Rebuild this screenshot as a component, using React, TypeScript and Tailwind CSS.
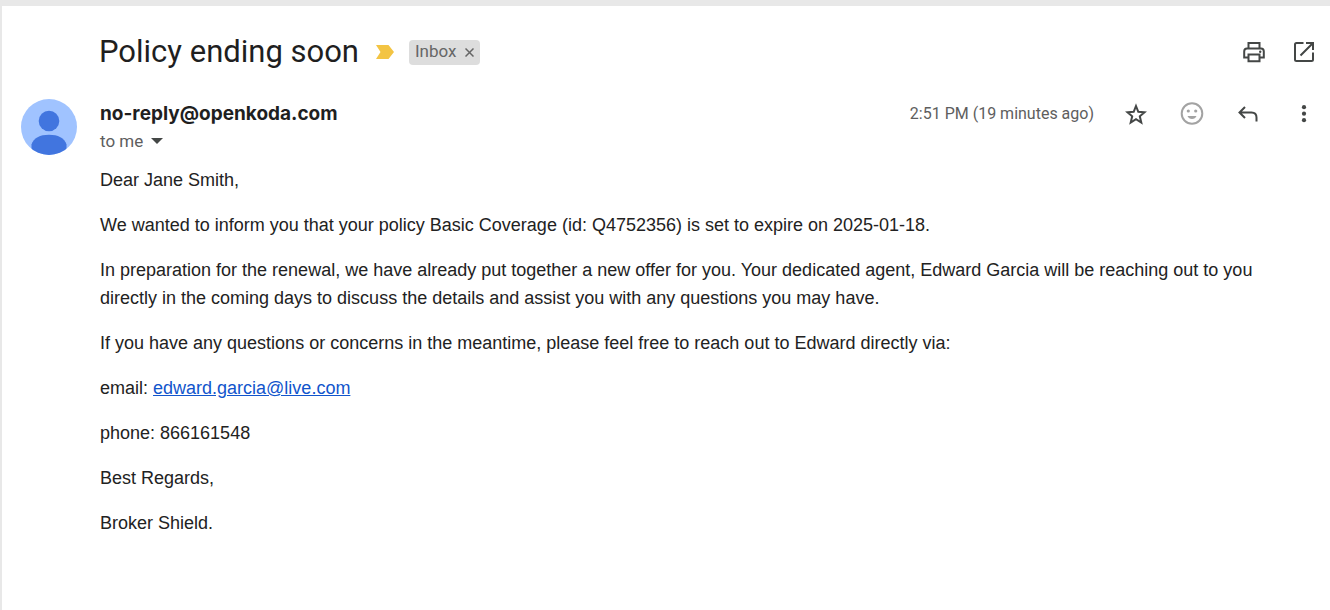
import type { ReactNode } from "react";

const paragraphs = [
  "Dear Jane Smith,",
  "We wanted to inform you that your policy Basic Coverage (id: Q4752356) is set to expire on 2025-01-18.",
  "In preparation for the renewal, we have already put together a new offer for you. Your dedicated agent, Edward Garcia will be reaching out to you directly in the coming days to discuss the details and assist you with any questions you may have.",
  "If you have any questions or concerns in the meantime, please feel free to reach out to Edward directly via:",
];

function IconButton({ label, children }: { label: string; children: ReactNode }) {
  return (
    <button type="button" aria-label={label} className="size-7 shrink-0 cursor-pointer text-[#444746]">
      <svg viewBox="0 0 28 28" fill="none" stroke="currentColor" strokeWidth="2" className="size-7">
        {children}
      </svg>
    </button>
  );
}

function Avatar() {
  return (
    <svg viewBox="0 0 56 56" className="size-14" role="img" aria-label="Sender">
      <clipPath id="avatar-clip">
        <circle cx="28" cy="28" r="28" />
      </clipPath>
      <g clipPath="url(#avatar-clip)">
        <rect width="56" height="56" fill="#a0c3ff" />
        <circle cx="28" cy="22" r="10.3" fill="#4175df" />
        <path d="M10.5 60V45.5C12.5 39 19 35.8 28 35.8S43.5 39 45.5 45.5V60Z" fill="#4175df" />
      </g>
    </svg>
  );
}

export default function App() {
  return (
    <div className="min-h-screen bg-[#e8e8e8] pt-1.5 pl-0.5 font-['Liberation_Sans',Arial,sans-serif]">
      <main className="min-h-[calc(100vh-6px)] bg-white pr-3 pl-[19px]">
        <header className="flex items-center pt-[26px] pl-[78px]">
          <h1 className="font-['Roboto',sans-serif] text-[31px] leading-10 text-[#1f1f1f]">Policy ending soon</h1>
          <button type="button" aria-label="Mark as not important" className="ml-[17px] cursor-pointer">
            <svg viewBox="0 0 18 14" className="h-3.5 w-[18px]">
              <path d="M0 0H12.5L18 7L12.5 14H0L4.5 7Z" fill="#f3c443" />
            </svg>
          </button>
          <div className="ml-[15px] flex h-[25px] items-center rounded bg-[#dddddd] px-1.5 font-['Roboto',sans-serif] text-[17px] text-[#666666]">
            <span>Inbox</span>
            <button type="button" aria-label="Remove label Inbox" className="ml-2 cursor-pointer">
              <svg viewBox="0 0 9 9" className="size-[9px]" stroke="currentColor" strokeWidth="1.5">
                <path d="M.5 .5L8.5 8.5M8.5 .5L.5 8.5" />
              </svg>
            </button>
          </div>
          <div className="ml-auto flex gap-[22px]">
            <IconButton label="Print all">
              <path d="M8.5 9.5V5H19.5V9.5M8.5 19.5H4.2V13.5Q4.2 10.5 7 10.5H21Q23.8 10.5 23.8 13.5V19.5H19.5" />
              <path d="M8.5 16.5H19.5V23.2H8.5Z" />
              <circle cx="20.2" cy="13.7" r="1.2" fill="currentColor" stroke="none" />
            </IconButton>
            <IconButton label="In new window">
              <path d="M13.5 5H6.5Q5 5 5 6.5V21.5Q5 23 6.5 23H21.5Q23 23 23 21.5V14.5" />
              <path d="M16 5H23V12M23 5L10.5 17.5" />
            </IconButton>
          </div>
        </header>

        <div className="flex gap-[23px] pt-[21px]">
          <div className="h-14 w-14 shrink-0 pt-1.5">
            <Avatar />
          </div>
          <div className="min-w-0 flex-1">
            <div className="flex items-start">
              <div>
                <h2 className="font-['Inter',sans-serif] text-[19px] leading-[42px] font-bold text-[#1f1f1f]">no-reply@openkoda.com</h2>
                <button type="button" className="flex h-3 cursor-pointer items-center gap-2 font-['Roboto',sans-serif] text-[17px] leading-3 text-[#5e5e5e]">
                  to me
                  <svg viewBox="0 0 12 6" className="h-1.5 w-3" fill="#444746">
                    <path d="M0 0H12L6 6Z" />
                  </svg>
                </button>
              </div>
              <div className="ml-auto flex h-[42px] items-center gap-7">
                <span className="font-['Roboto',sans-serif] text-base text-[#5e5e5e]">2:51 PM (19 minutes ago)</span>
                <IconButton label="Star">
                  <path d="M14 6L16.3 11.8L22.5 12.3L17.8 16.3L19.3 22.5L14 19.2L8.7 22.5L10.2 16.3L5.5 12.3L11.7 11.8Z" />
                </IconButton>
                <IconButton label="Add reaction">
                  <g stroke="#a3a3a3">
                    <circle cx="14" cy="13.5" r="10.3" />
                    <path d="M9.5 16H18.5Q17.3 19 14 19T9.5 16Z" fill="#a3a3a3" stroke="none" />
                    <circle cx="10.3" cy="11" r="1.6" fill="#a3a3a3" stroke="none" />
                    <circle cx="17.7" cy="11" r="1.6" fill="#a3a3a3" stroke="none" />
                  </g>
                </IconButton>
                <IconButton label="Reply">
                  <path d="M11 7L5.5 12.5L11 18M5.5 12.5H17.5Q22.5 12.5 22.5 17.5V21.5" />
                </IconButton>
                <IconButton label="More">
                  <g fill="currentColor" stroke="none">
                    <circle cx="14" cy="7.2" r="2.1" />
                    <circle cx="14" cy="13.7" r="2.1" />
                    <circle cx="14" cy="20.2" r="2.1" />
                  </g>
                </IconButton>
              </div>
            </div>

            <div className="mt-[19px] space-y-[17px] pr-10 text-lg leading-7 text-[#222222]">
              {paragraphs.map((text) => (
                <p key={text}>{text}</p>
              ))}
              <p>
                email:{" "}
                <a href="mailto:edward.garcia@live.com" className="text-[#1155cc] underline">
                  edward.garcia@live.com
                </a>
              </p>
              <p>phone: 866161548</p>
              <p>Best Regards,</p>
              <p>Broker Shield.</p>
            </div>
          </div>
        </div>
      </main>
    </div>
  );
}
